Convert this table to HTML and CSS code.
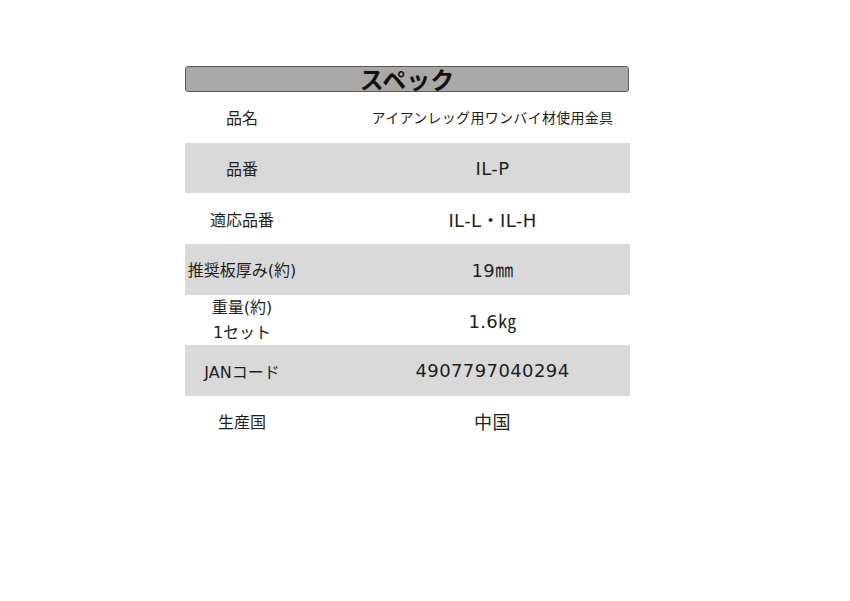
FILE: index.html
```html
<!DOCTYPE html>
<html lang="ja">
<head>
<meta charset="utf-8">
<link rel="stylesheet" href="styles.css">
</head>
<body>
<div class="spec">
  <div class="title">スペック</div>
  <div class="row">
    <div class="label">品名</div>
    <div class="value small">アイアンレッグ用ワンバイ材使用金具</div>
  </div>
  <div class="row alt">
    <div class="label">品番</div>
    <div class="value">IL-P</div>
  </div>
  <div class="row">
    <div class="label">適応品番</div>
    <div class="value">IL-L・IL-H</div>
  </div>
  <div class="row alt">
    <div class="label">推奨板厚み(約)</div>
    <div class="value">19㎜</div>
  </div>
  <div class="row">
    <div class="label two">重量(約)<br>1セット</div>
    <div class="value">1.6㎏</div>
  </div>
  <div class="row alt">
    <div class="label">JANコード</div>
    <div class="value">4907797040294</div>
  </div>
  <div class="row">
    <div class="label">生産国</div>
    <div class="value">中国</div>
  </div>
</div>
</body>
</html>
```
FILE: styles.css
```css
html, body {
  margin: 0;
  padding: 0;
  background: #fff;
}
body {
  font-family: "Noto Sans CJK JP", "Noto Sans", sans-serif;
  color: #1e1e1e;
}
.spec {
  width: 445px;
  margin: 66px 0 0 185px;
}
.title {
  box-sizing: border-box;
  width: 444px;
  height: 26px;
  background: #a9a8a6;
  border: 1px solid #5a5a5a;
  border-radius: 3px;
  text-align: center;
  font-weight: bold;
  font-size: 24px;
  line-height: 23px;
  color: #111;
}
.row {
  display: grid;
  grid-template-columns: 114px 1fr;
  height: 50.7px;
  align-items: center;
}
.row.alt {
  background: #d9d9d9;
}
.label {
  text-align: center;
  font-size: 16px;
  white-space: nowrap;
  font-family: "DejaVu Sans", "Noto Sans CJK JP", sans-serif;
}
.label.two {
  line-height: 25px;
}
.value {
  text-align: center;
  padding-left: 56px;
  font-size: 18px;
  letter-spacing: 0.4px;
  font-family: "DejaVu Sans", "Noto Sans CJK JP", sans-serif;
}
.value.small {
  font-size: 14px;
  letter-spacing: 0.3px;
}
```
